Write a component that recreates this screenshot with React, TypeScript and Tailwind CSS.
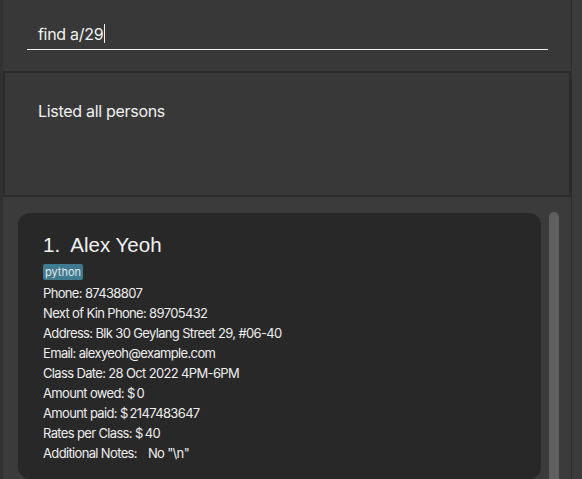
import React from "react";

const details = [
  "Phone: 87438807",
  "Next of Kin Phone: 89705432",
  "Address: Blk 30 Geylang Street 29, #06-40",
  "Email: alexyeoh@example.com",
  "Class Date: 28 Oct 2022 4PM-6PM",
];

const amounts = [
  ["Amount owed:", "0"],
  ["Amount paid:", "2147483647"],
  ["Rates per Class:", "40"],
];

export default function App() {
  return (
    <div className="flex h-[479px] w-[582px] overflow-hidden bg-[#3b3b3b] font-['Inter',sans-serif] text-[#f2f2f2]">
      <div className="flex w-[572px] shrink-0 flex-col border-l-[3px] border-r border-l-[#313131] border-r-[#2c2c2c] bg-[#383838]">
        {/* Command box */}
        <div className="h-[71px] shrink-0 pl-[24px] pr-[23px] pt-[18px]">
          <div className="flex h-[32px] items-center border-b border-[#f0f0f0] pl-[11px] text-[16px]">
            <span className="tracking-[-0.3px]">find a/29</span>
            <span className="ml-[1px] h-[19px] w-px bg-[#f0f0f0]" />
          </div>
        </div>

        {/* Result display */}
        <div className="h-[126px] shrink-0 border-[2px] border-[#2b2b2b] bg-[#383838] pl-[33px] pt-[26px]">
          <p className="text-[16px] tracking-[-0.3px]">Listed all persons</p>
        </div>

        {/* Person list */}
        <div className="flex min-h-0 flex-1 gap-[8px] overflow-hidden bg-[#3b3b3b] pl-[15px] pt-[16px]">
          <div className="h-[266px] w-[523px] shrink-0 rounded-[12px] bg-[#282828] pl-[25px] pt-[19px]">
            <div className="font-['Liberation_Sans',Arial,sans-serif] text-[20.5px] leading-[26px]">
              1.&nbsp; Alex Yeoh
            </div>
            <div className="mt-[6px] flex">
              <span className="rounded-[2px] bg-[#3e7b91] px-[2px] text-[11px] leading-[16px] text-[#e6e6e6]">
                python
              </span>
            </div>
            <div className="mt-[3px] text-[13px] leading-[20px] tracking-[-0.65px] text-[#eeeeee]">
              {details.map((d) => (
                <div key={d}>{d}</div>
              ))}
              {amounts.map(([label, value]) => (
                <div key={label}>
                  {label} $<span className="ml-[2px]">{value}</span>
                </div>
              ))}
              <div>
                Additional Notes:
                <span className="ml-[11px]">No "\n"</span>
              </div>
            </div>
          </div>
          <div className="mt-[-1px] h-[300px] w-[10px] shrink-0 rounded-[5px] bg-[#5f5f5f]" />
        </div>
      </div>
    </div>
  );
}
